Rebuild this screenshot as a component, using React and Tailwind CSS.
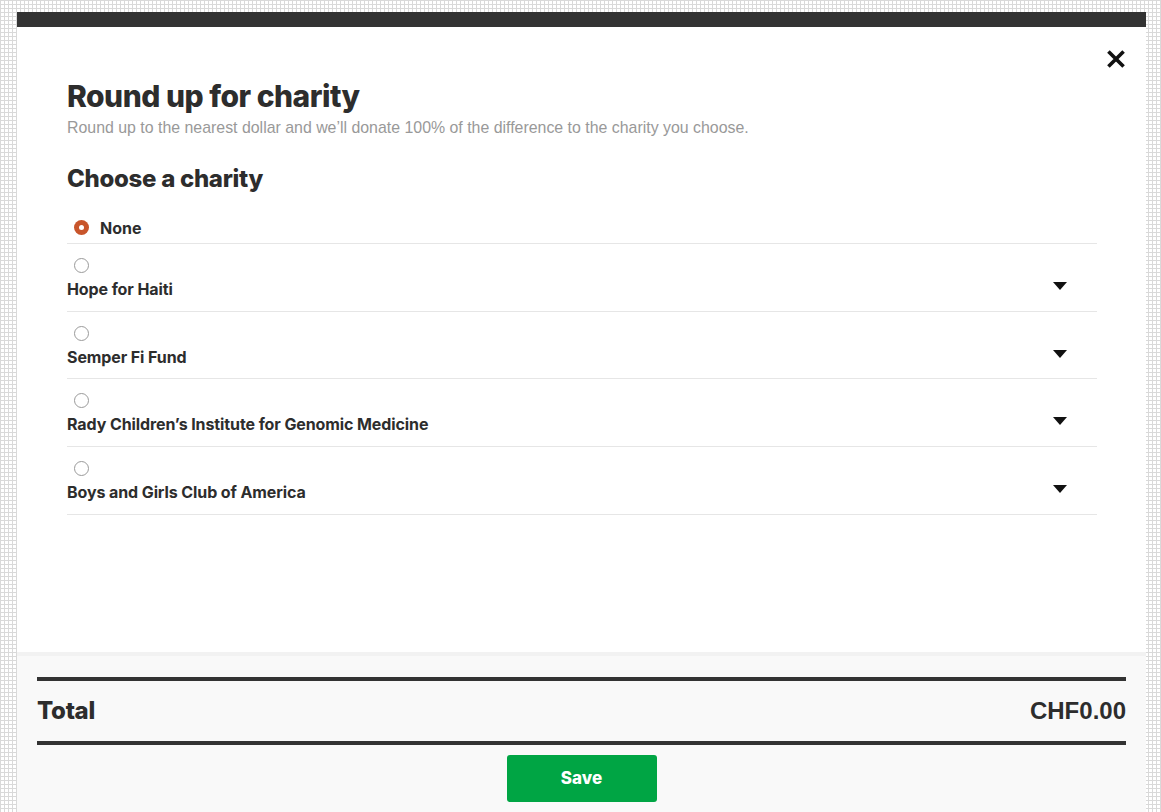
import React, { useState } from "react";

const charities = [
  "Hope for Haiti",
  "Semper Fi Fund",
  "Rady Children\u2019s Institute for Genomic Medicine",
  "Boys and Girls Club of America",
];

const Radio = ({ checked, onClick }) => (
  <button
    onClick={onClick}
    className={
      checked
        ? "w-[15px] h-[15px] rounded-full bg-[#c8552b] flex items-center justify-center"
        : "w-[15px] h-[15px] rounded-full border border-[#9a9a9a] bg-white"
    }
  >
    {checked && <span className="w-[5px] h-[5px] rounded-full bg-white" />}
  </button>
);

const App = () => {
  const [selected, setSelected] = useState("None");

  return (
    <div className="min-h-screen pt-[12px] bg-white bg-[linear-gradient(#d9d9d9_1px,transparent_1px),linear-gradient(90deg,#d9d9d9_1px,transparent_1px)] bg-[size:4px_4px] font-['Inter',sans-serif] text-[#2d2d2d]">
      <div className="ml-[17px] w-[1129px]">
        {/* top strip */}
        <div className="h-[15px] bg-[#333333]" />

        {/* body */}
        <div className="relative h-[625px] bg-white pl-[50px] pr-[49px] pt-[52px]">
          <button className="absolute right-[21px] top-[23px] text-[#111]">
            <svg width="18" height="18" viewBox="0 0 20 20">
              <path d="M3 3 L17 17 M17 3 L3 17" stroke="currentColor" strokeWidth="4" strokeLinecap="square" />
            </svg>
          </button>

          <h1 className="text-[30px] leading-[34px] font-extrabold tracking-[-0.5px]">Round up for charity</h1>
          <p className="mt-[6px] text-[15.9px] leading-[18px] text-[#999999] font-['Liberation_Sans',sans-serif]">
            Round up to the nearest dollar and we’ll donate 100% of the difference to the charity you choose.
          </p>

          <h2 className="mt-[27px] text-[24px] leading-[30px] font-extrabold tracking-[-0.3px]">Choose a charity</h2>

          <div className="mt-[14px]">
            <div className="flex items-center gap-[11px] pl-[7px] h-[36px] border-b border-[#e6e6e6] pt-[4px]">
              <Radio checked={selected === "None"} onClick={() => setSelected("None")} />
              <span className="text-[16px] font-bold">None</span>
            </div>
            {charities.map((c) => (
              <div key={c} className="relative h-[67.7px] border-b border-[#e6e6e6] pt-[10px]">
                <div className="pl-[7px]">
                  <Radio checked={selected === c} onClick={() => setSelected(c)} />
                </div>
                <div className="mt-[1px] text-[16px] leading-[20px] font-bold tracking-[-0.1px]">{c}</div>
                <svg className="absolute right-[30px] top-[38px]" width="14" height="8" viewBox="0 0 14 8">
                  <path d="M0 0 H14 L7 8 Z" fill="#111" />
                </svg>
              </div>
            ))}
          </div>
        </div>

        {/* footer */}
        <div className="h-[4px] bg-[#f2f2f2]" />
        <div className="bg-[#f9f9f9] px-[20px] pt-[21px] h-[157px]">
          <div className="border-t-4 border-b-4 border-[#333333] h-[68px] flex items-center justify-between">
            <span className="text-[24px] font-extrabold tracking-[-0.3px]">Total</span>
            <span className="text-[24px] font-bold font-['Liberation_Sans',sans-serif]">CHF0.00</span>
          </div>
          <div className="flex justify-center mt-[10px]">
            <button className="w-[150px] h-[47px] rounded-[3px] bg-[#00a544] text-white text-[17px] font-extrabold">
              Save
            </button>
          </div>
        </div>
      </div>
    </div>
  );
};

export default App;
